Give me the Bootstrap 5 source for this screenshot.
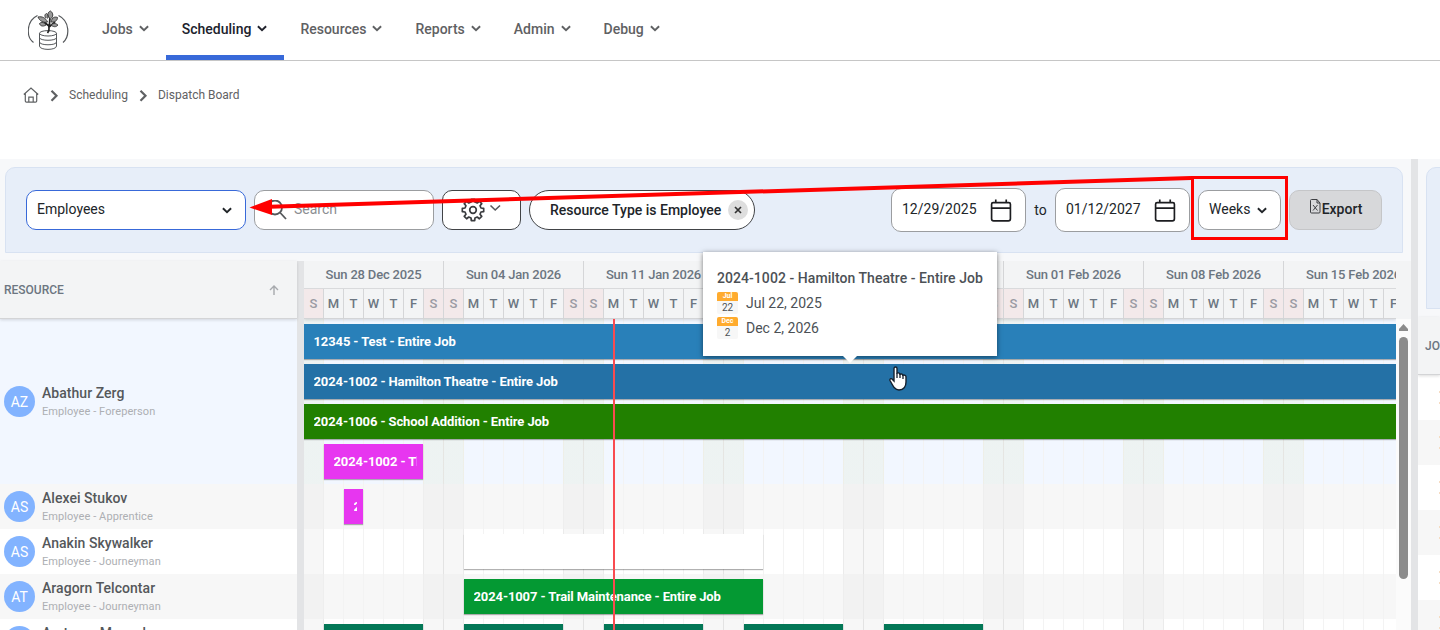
<!DOCTYPE html>
<html lang="en">
<head>
<meta charset="utf-8">
<meta name="viewport" content="width=device-width, initial-scale=1">
<title>Dispatch Board</title>
<link href="https://cdn.jsdelivr.net/npm/bootstrap@5.3.0/dist/css/bootstrap.min.css" rel="stylesheet">
<style>
body{font-family:Roboto,"Liberation Sans",sans-serif;font-size:14px;line-height:20px;color:#212529;height:630px;overflow:hidden;background:#fff}
svg{display:block;flex:none}
.topnav{height:61px;border-bottom:1px solid #c6c6c6;padding:0 0 0 28px}
.topnav .nav-link{height:60px;padding:0 17px 0 16px;font-weight:500;color:#5f6163;border-bottom:5px solid transparent;border-top:2px solid transparent;gap:6px;display:flex;align-items:center}
.topnav .nav-link.active{color:#20222c;border-bottom-color:#3869d9}
.crumbs{height:98px;padding:24px 0 0 23px;font-size:12px;color:#5f6163}
.crumb-sep{margin:5px 8px 0}
.workspace{height:471px;background:#f7f8fa}
.board{width:1411px}
.filters{height:86px;margin:8px 8px 8px 5px;padding:0 20px;background:#e7eef9;border:1px solid #d8e2f2;border-radius:10px 10px 0 0}
.field{height:40px;border:1px solid #9b9da0;border-radius:10px;background:#fff;padding:0 10px}
.field>span{padding-bottom:2px}
.field-type{width:220px;border-color:#3869d9;padding-right:13px;margin-right:8px}
.field-search{width:180px;margin-right:8px;color:#8b8e92;padding-left:12px}
.field-gear{width:79px;border-color:#414346;margin-right:8px;padding:0 18px}
.chip{width:226px;height:40px;border:1px solid #414346;border-radius:20px;background:#fff;font-weight:500;padding:0 6px 0 20px}
.chip-x{width:20px;height:20px;border-radius:50%;background:#dedede}
.field-date{width:135px;height:44px;padding-right:13px}
.field-export{width:93px;background:#d7d8da;border-color:#c5c6c8;font-weight:500}
.splitter{width:7px;background:#e3e4e6;flex:none}
.res-pane{width:297px;flex:none}
.head-cell{height:58px;background:#f3f4f5;border-bottom:1px solid #d3d4d6;box-shadow:0 1px 3px rgba(0,0,0,.14);color:#6c7681;position:relative;z-index:1}
.res-head{padding:0 18px 0 4px;font-size:12px;font-weight:500}
.res-head span{padding-top:1px}
.res-row{height:45px;padding-left:4px;background:#fff;flex:none}
.res-row.alt,.time-row.alt{background-color:#f7f7f7}
.res-row.picked,.time-row.picked{background-color:#f2f7ff;height:165px}
.avatar-dot{width:31px;height:31px;border-radius:50%;background:#82b3ff;color:#fff}
.who{font-weight:500;color:#55585b;line-height:18px;letter-spacing:.04px}
.role-line{font-size:11px;color:#adafb3;line-height:17px;letter-spacing:.08px;position:relative;top:1px}
.time-pane{width:1092px;flex:none;position:relative}
.weeks{display:grid;grid-auto-flow:column;grid-auto-columns:140px;height:28px;border-bottom:1px solid #d9dadc;font-size:13px;font-weight:500;line-height:27px;letter-spacing:-.18px}
.weeks>div{border-right:1px solid #d5d6d8;text-align:center}
.days{display:grid;grid-auto-flow:column;grid-auto-columns:20px;height:29px;font-size:13px;font-weight:500;line-height:29px;text-align:center}
.days>div{border-right:1px solid #d5d6d8}
.days>.off{background:#f3e9ea;color:#9a9aa3}
.time-row{--off:rgba(0,0,0,.032);--off-line:rgba(0,0,0,.065);height:45px;flex:none;display:grid;grid-template-columns:repeat(56,20px);grid-auto-rows:35px;row-gap:5px;padding-top:5px;background-color:#fff;
background-image:linear-gradient(90deg,var(--off) 0 20px,transparent 20px 119px,var(--off) 119px 139px,var(--off-line) 139px 140px),linear-gradient(90deg,transparent 19px,#f3f3f3 19px);background-size:140px 100%,20px 100%}
.time-row.alt{--off:rgba(0,0,0,.02);--off-line:rgba(0,0,0,.04)}
.time-row.picked{--off:rgba(200,205,130,.1);--off-line:rgba(110,110,80,.1)}
.job-bar{margin-right:1px;padding:0 6px 0 9.5px;color:#fff;font-size:13px;font-weight:700;line-height:35px;letter-spacing:-.11px;white-space:nowrap;box-shadow:0 1px 1px rgba(0,0,0,.3)}
.job-bar>div{overflow:hidden}
.now-line{position:absolute;left:309px;top:58px;bottom:0;width:2px;background:#f94b50;z-index:2}
.scroll-col{width:15px;flex:none}
.scroll-head{height:58px;background:#f3f4f5}
.scroll-track{background:#fbfbfb}
.scroll-up{margin:5px auto 6px}
.scroll-thumb{width:9px;height:242px;border-radius:5px;background:#8b8b8b;margin:0 auto}
.jobs-pane{width:22px;overflow:hidden}
.jobs-card{width:60px;height:142px;margin:8px 0 8px 8px;background:#e7eef9;border:1px solid #d8e2f2;border-radius:10px 0 0 0}
.jobs-head{font-size:12px;font-weight:500;padding-left:7px}
.jobs-row{height:45px;flex:none;background:#fff;padding-top:16px}
.jobs-row:nth-child(even){background:#f7f7f7}
.jobs-row i{display:block;width:1px;height:2px;margin:0 0 9px 21px;background:#f6dcc2}
.tip{position:absolute;left:703px;top:252px;width:294px;height:104px;background:#fff;box-shadow:0 1px 5px rgba(0,0,0,.5);color:#4c5156;padding:16px 14px;z-index:5}
.tip::after{content:"";position:absolute;left:140px;bottom:-7px;border:7px solid transparent;border-bottom:0;border-top-color:#fff}
.tip-title{font-weight:500;line-height:20px;letter-spacing:.055px}
.tip-date{height:22px;margin-bottom:3px;gap:8px}
.mini-cal{width:21px;height:22px;background:#f7f7f7;border-radius:2px;overflow:hidden;font-size:10px;line-height:13px;text-align:center}
.mini-cal b{display:block;height:9px;background:#ffab2e;color:#fff;font-size:7px;line-height:8px;font-weight:700}
.hand{position:absolute;left:889px;top:366px;z-index:6}
.callout-marks{position:absolute;left:0;top:0;z-index:7;pointer-events:none}
</style>
</head>
<body>
<svg class="d-none">
  <symbol id="chev" viewBox="0 0 10 7"><path d="M.9 1.2 5 5.2 9.1 1.2" fill="none" stroke="currentColor" stroke-width="1.900"/></symbol>
  <symbol id="cal" viewBox="0 0 20 22"><path d="M2.500 3.500h15q1.500 0 1.500 1.500v14q0 2-2 2H3q-2 0-2-2V5q0-1.500 1.500-1.500zM1 8.800h18M5 .5v3M15 .5v3" fill="none" stroke="#1c1d20" stroke-width="1.600"/></symbol>
  <symbol id="sep" viewBox="0 0 14 12"><path d="M4.500.8 9.500 5.800l-5 5" fill="none" stroke="#5f6163" stroke-width="2.200"/></symbol>
</svg>

<header class="topnav d-flex">
  <svg class="mt-2" width="42" height="44" viewBox="0 0 42 44" fill="none" stroke="#55585b">
    <path d="M9.500 7.500C-2 13-2 29 5.500 34.500M30.500 7.500c11.500 5.500 11.500 21 4.500 27" stroke-width="1.200"/>
    <g stroke-width="1"><ellipse cx="20" cy="25.300" rx="8.500" ry="2.700"/><path d="M11.500 25.300v12.700c0 4.500 17 4.500 17 0V25.300M11.500 29.500c0 3.700 17 3.700 17 0M11.500 34c0 3.700 17 3.700 17 0"/></g>
    <path d="M19.500 25c3.500-4 0-5 2-9L22 8M21 18l-5-4M21 19l6-5" stroke="#222" stroke-width="1.700"/>
    <path d="M22.500 11c-4-3-3-7 0-8 3 2 3 6 0 8zM19.500 14c-4 1-8-1-9.500-5 4-1 8 1 9.500 5zM18 17c-3 2-6 1-6.500-1.500 2-2 5-1 6.500 1.500zM23 14c1-5 4-5.500 6.500-4.500 0 3-2.500 5-6.500 4.500zM23 17c3-2.500 5-1.500 7 0-2 2.500-5 2-7 0zM18 10c-2-2-1-4 .5-4.500 2 1.500 2 3 1 5" fill="#999" stroke="#333" stroke-width=".9"/>
  </svg>
  <nav class="nav ms-3">
    <a class="nav-link" href="#">Jobs<svg width="10" height="7"><use href="#chev"/></svg></a>
    <a class="nav-link active" href="#">Scheduling<svg width="10" height="7"><use href="#chev"/></svg></a>
    <a class="nav-link" href="#">Resources<svg width="10" height="7"><use href="#chev"/></svg></a>
    <a class="nav-link" href="#">Reports<svg width="10" height="7"><use href="#chev"/></svg></a>
    <a class="nav-link" href="#">Admin<svg width="10" height="7"><use href="#chev"/></svg></a>
    <a class="nav-link" href="#">Debug<svg width="10" height="7"><use href="#chev"/></svg></a>
  </nav>
</header>

<div class="crumbs d-flex align-items-start">
  <svg width="16" height="20" viewBox="0 0 16 20" fill="none" stroke="#5f6163" stroke-width="1.200"><path d="M.8 9.500 8 3l7.200 6.500M2.300 8.500V16q0 1.200 1.200 1.200h9q1.200 0 1.200-1.200V8.500M5.800 17v-4.800h4.400V17"/></svg>
  <svg class="crumb-sep" width="14" height="12"><use href="#sep"/></svg>
  <span>Scheduling</span>
  <svg class="crumb-sep" width="14" height="12"><use href="#sep"/></svg>
  <span>Dispatch Board</span>
</div>

<main class="workspace d-flex overflow-hidden">
  <section class="board d-flex flex-column flex-shrink-0">
    <div class="filters d-flex align-items-center flex-shrink-0">
      <div class="field field-type d-flex align-items-center justify-content-between"><span>Employees</span><svg width="10" height="7"><use href="#chev"/></svg></div>
      <div class="field field-search d-flex align-items-center"><svg width="20" height="20" viewBox="0 0 20 20" fill="none" stroke="#55585b" stroke-width="1.800"><circle cx="8" cy="7.500" r="7"/><path d="M13 12.500 19 19"/></svg><span style="margin-left:7px">Search</span></div>
      <div class="field field-gear d-flex align-items-center"><svg width="24" height="24" viewBox="0 0 24 24" fill="none" stroke="#3a3c3f" stroke-width="1.700" stroke-linejoin="round"><circle cx="12" cy="12" r="3.300"/><path id="gear" d=""/></svg><svg class="ms-1 mb-1" width="12" height="8" viewBox="0 0 12 8"><path d="m1.500 1.500 4.700 4.500L11 1.500" fill="none" stroke="#55585b" stroke-width="1.600"/></svg></div>
      <div class="chip d-flex align-items-center justify-content-between"><span>Resource Type is Employee</span><span class="chip-x d-flex align-items-center justify-content-center"><svg width="8" height="8" viewBox="0 0 8 8"><path d="m1 1 6 6M7 1 1 7" stroke="#333" stroke-width="1.700"/></svg></span></div>
      <div class="field field-date d-flex align-items-center justify-content-between ms-auto"><span>12/29/2025</span><svg width="22" height="23"><use href="#cal"/></svg></div>
      <span class="text-center" style="width:29px">to</span>
      <div class="field field-date d-flex align-items-center justify-content-between"><span>01/12/2027</span><svg width="22" height="23"><use href="#cal"/></svg></div>
      <div class="field d-flex align-items-center ms-2 me-2" style="width:83px"><span>Weeks</span><svg style="margin-left:7px" width="10" height="7"><use href="#chev"/></svg></div>
      <div class="field field-export d-flex align-items-center justify-content-center"><svg class="mb-2" width="13" height="15" viewBox="0 0 13 15" fill="none" stroke="#3d3f42" stroke-width="1"><path d="M1.500 1.500q0-1 1-1H8l3 3.500v9q0 1-1 1H2.500q-1 0-1-1zM8 .5V4h3M4 6l4.500 5.500M8.500 6 4 11.500"/></svg><span>Export</span></div>
    </div>

    <div class="d-flex flex-fill">
      <div class="res-pane d-flex flex-column">
        <div class="head-cell res-head d-flex align-items-center justify-content-between flex-shrink-0"><span>RESOURCE</span><svg width="10" height="10" viewBox="0 0 10 10" fill="none" stroke="#a6a9ad" stroke-width="1.400"><path d="M5 10V1M1 5l4-4 4 4"/></svg></div>
        <div id="people"></div>
      </div>
      <div class="splitter"></div>
      <div class="time-pane d-flex flex-column overflow-hidden">
        <div class="head-cell flex-shrink-0 overflow-hidden"><div class="weeks" id="weeks"></div><div class="days" id="days"></div></div>
        <div id="rows"></div>
        <div class="now-line"></div>
      </div>
      <div class="scroll-col d-flex flex-column">
        <div class="scroll-head"></div>
        <div class="scroll-track flex-fill"><svg class="scroll-up" width="9" height="7" viewBox="0 0 9 7"><path d="M4.500 0 9 5v2H0V5z" fill="#8b8b8b"/></svg><div class="scroll-thumb"></div></div>
      </div>
    </div>
  </section>
  <div class="splitter"></div>
  <section class="jobs-pane d-flex flex-column">
    <div class="jobs-card flex-shrink-0"></div>
    <div class="head-cell jobs-head d-flex align-items-center flex-shrink-0 text-nowrap">JOB</div>
    <div>
      <div class="jobs-row"><i></i><i></i></div><div class="jobs-row"><i></i><i></i></div>
      <div class="jobs-row"><i></i><i></i></div><div class="jobs-row"><i></i><i></i></div>
      <div class="jobs-row"><i></i><i></i></div><div class="jobs-row"><i></i><i></i></div>
    </div>
  </section>
</main>

<div class="tip">
  <div class="tip-title text-nowrap">2024-1002 - Hamilton Theatre - Entire Job</div>
  <div class="tip-date d-flex align-items-center mt-1"><div class="mini-cal"><b>Jul</b>22</div><span>Jul 22, 2025</span></div>
  <div class="tip-date d-flex align-items-center"><div class="mini-cal"><b>Dec</b>2</div><span>Dec 2, 2026</span></div>
</div>

<svg class="hand" width="19" height="26" viewBox="0 0 19 26"><path d="M5 2.500q0-1.500 1.500-1.500T8 2.500V7q2.800-.5 3 1.200 2.500-.6 2.800 1 3-.6 3.200 1.500V16c0 4-2 8-7 8-4 0-5.500-3-9-9.500-.5-2 1.500-2.500 2.500-1L5 15z" fill="#fff" stroke="#14202e" stroke-width="1.400"/><path d="M8 7v5M11 8v4M14 9v4" stroke="#14202e" stroke-width="1.300"/></svg>

<svg class="callout-marks" width="1440" height="260"><path d="M1191 178 270 206.800" stroke="red" stroke-width="4"/><path d="M249.500 207.500 272 199v16z" fill="red"/><rect x="1192.500" y="177.500" width="94" height="61" fill="none" stroke="red" stroke-width="3"/></svg>

<script>
const people = [
  ['AZ','Abathur Zerg','Foreperson','picked'], ['AS','Alexei Stukov','Apprentice','alt'],
  ['AS','Anakin Skywalker','Journeyman',''], ['AT','Aragorn Telcontar','Journeyman','alt'],
  ['AM','Arcturus Mengsk','Journeyman','']];
document.getElementById('people').innerHTML = people.map(([i,n,r,c]) =>
  `<div class="res-row d-flex align-items-center ${c}"><div class="avatar-dot d-flex align-items-center justify-content-center">${i}</div><div style="margin-left:7px"><div class="who">${n}</div><div class="role-line">Employee - ${r}</div></div></div>`).join('');

const weeks = ['28 Dec 2025','04 Jan 2026','11 Jan 2026','18 Jan 2026','25 Jan 2026','01 Feb 2026','08 Feb 2026','15 Feb 2026'];
document.getElementById('weeks').innerHTML = weeks.map(w => `<div>Sun ${w}</div>`).join('');
document.getElementById('days').innerHTML = weeks.map(() => [...'SMTWTFS'].map(d => `<div${d==='S'?' class="off"':''}>${d}</div>`).join('')).join('');

// each bar: [lane, first day column, days, colour, label]
const rows = [
  ['picked', [[1,1,56,'#2980b9','12345 - Test - Entire Job'],[2,1,56,'#2471a6','2024-1002 - Hamilton Theatre - Entire Job'],[3,1,56,'#218000','2024-1006 - School Addition - Entire Job'],[4,2,5,'#e736f0','2024-1002 - Theatre']]],
  ['alt', [[1,3,1,'#e736f0','2024']]],
  ['', [[1,9,15,'#fff','']]],
  ['alt', [[1,9,15,'#049933','2024-1007 - Trail Maintenance - Entire Job']]],
  ['', [2,9,16,23,30].map(s => [1,s,5,'#047857',''])]];
document.getElementById('rows').innerHTML = rows.map(([c,bars]) => `<div class="time-row ${c}">` + bars.map(([l,s,n,k,t]) =>
  `<div class="job-bar" style="grid-row:${l};grid-column:${s}/span ${n};background:${k}"><div>${t}</div></div>`).join('') + '</div>').join('');

// eight-tooth cog outline
let d = '';
for (let k = 0; k < 8; k++) {
  [[-14,8.2],[-9,10.8],[9,10.8],[14,8.2]].forEach(([a,r],j) => {
    const t = (k*45 + a) * Math.PI/180;
    d += (k||j ? 'L' : 'M') + (12 + r*Math.cos(t)).toFixed(2) + ' ' + (12 + r*Math.sin(t)).toFixed(2);
  });
}
document.getElementById('gear').setAttribute('d', d + 'Z');
</script>
<script src="https://cdn.jsdelivr.net/npm/bootstrap@5.3.0/dist/js/bootstrap.bundle.min.js"></script>
</body>
</html>
